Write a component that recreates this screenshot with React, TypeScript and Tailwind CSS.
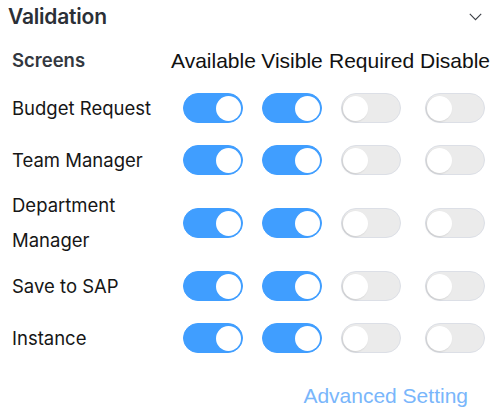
import { useState } from 'react';

type Row = { name: string; flags: boolean[] };

const columns = ['Available', 'Visible', 'Required', 'Disable'];

const initialRows: Row[] = [
  { name: 'Budget Request', flags: [true, true, false, false] },
  { name: 'Team Manager', flags: [true, true, false, false] },
  { name: 'Department Manager', flags: [true, true, false, false] },
  { name: 'Save to SAP', flags: [true, true, false, false] },
  { name: 'Instance', flags: [true, true, false, false] },
];

function Toggle({ on, onChange }: { on: boolean; onChange: () => void }) {
  return (
    <button
      type="button"
      onClick={onChange}
      className={`relative flex h-[30px] w-[60px] items-center rounded-full border ${
        on ? 'justify-end border-[#409eff] bg-[#409eff] pr-[1.5px]' : 'justify-start border-[#dcdfe6] bg-[#ebebeb] pl-[1px]'
      }`}
    >
      <span
        className={`block h-[25px] w-[25px] rounded-full bg-white ${on ? '' : 'shadow-[-1px_1px_2px_rgba(0,0,0,0.12)]'}`}
      />
    </button>
  );
}

export default function App() {
  const [rows, setRows] = useState(initialRows);
  const [open, setOpen] = useState(true);

  function flip(r: number, c: number) {
    setRows(prev => prev.map((row, i) => i === r ? { ...row, flags: row.flags.map((f, j) => j === c ? !f : f) } : row));
  }

  return (
    <div className="h-[415px] w-[502px] bg-white font-['Inter',sans-serif]">
      <div className="flex h-[33px] items-center justify-between pl-[8px] pr-[20px]">
        <h2 className="text-[21px] font-semibold tracking-[-0.2px] text-[#2b2f36]">Validation</h2>
        <button type="button" onClick={() => setOpen(!open)} className="text-[#3b3f46]">
          <svg width="13" height="8" viewBox="0 0 13 8" fill="none">
            <path d="M0.8 0.8 L6.5 6.6 L12.2 0.8" stroke="currentColor" strokeWidth="1.1" />
          </svg>
        </button>
      </div>

      {open && (
        <div>
          <div className="grid h-[49px] grid-cols-[171px_84px_74px_84px_84px] items-center pt-[6px]">
            <div className="pl-[12px] text-[18.5px] font-semibold text-[#333840]">Screens</div>
            {columns.map(c => (
              <div key={c} className="text-center font-['Liberation_Sans',sans-serif] text-[21px] text-[#111]">{c}</div>
            ))}
          </div>

          {rows.map((row, r) => (
            <div
              key={row.name}
              className={`grid grid-cols-[171px_84px_74px_84px_84px] items-center ${r === 2 ? 'h-[74px]' : 'h-[52px]'}`}
            >
              <div className={`pl-[12px] text-[18.5px] leading-[35px] text-[#161616] ${r === 2 ? 'w-[140px]' : ''}`}>{row.name}</div>
              {row.flags.map((f, c) => (
                <div key={c} className="flex justify-center">
                  <Toggle on={f} onChange={() => flip(r, c)} />
                </div>
              ))}
            </div>
          ))}

          <div className="flex justify-end pr-[34px] pt-[16px]">
            <button type="button" className="font-['Liberation_Sans',sans-serif] text-[21px] text-[#79b6fb]">Advanced Setting</button>
          </div>
        </div>
      )}
    </div>
  );
}
